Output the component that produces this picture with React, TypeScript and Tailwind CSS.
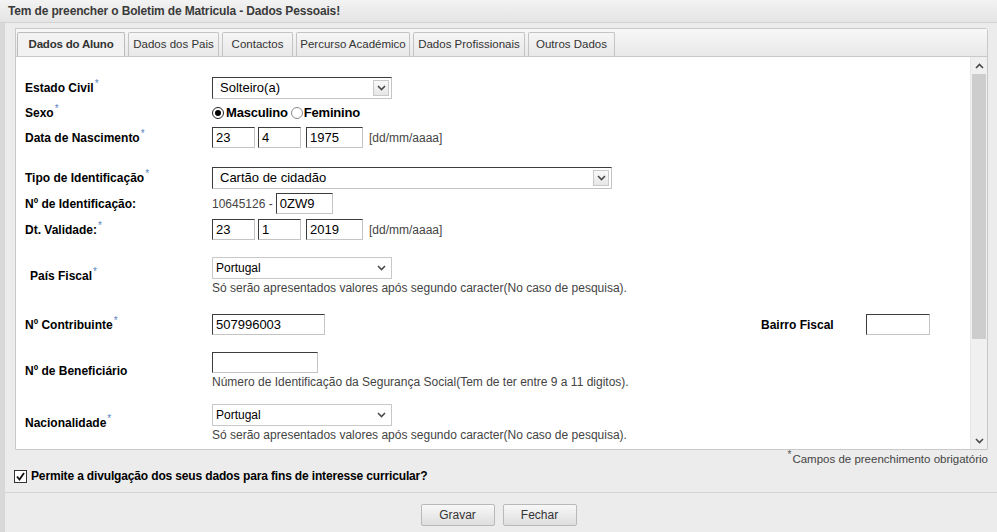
import React from "react";

const tabs = [
  { label: "Dados do Aluno", w: "w-[108px]" },
  { label: "Dados dos Pais", w: "w-[91px]" },
  { label: "Contactos", w: "w-[71px]" },
  { label: "Percurso Académico", w: "w-[114px]" },
  { label: "Dados Profissionais", w: "w-[112px]" },
  { label: "Outros Dados", w: "w-[87px]" },
];

const Req = () => (
  <sup className="ml-[1px] text-[10px] font-normal text-[#5a84c0]">*</sup>
);

const Label = ({ text, req, indent }: { text: string; req?: boolean; indent?: boolean }) => (
  <div
    className={`w-[187px] shrink-0 text-[12px] font-bold text-black ${indent ? "pl-[5px]" : ""}`}
  >
    {text}
    {req && <Req />}
  </div>
);

const Chevron = ({ up }: { up?: boolean }) => (
  <svg width="9" height="6" viewBox="0 0 9 6">
    <path
      d={up ? "M1 5 L4.5 1.5 L8 5" : "M1 1 L4.5 4.5 L8 1"}
      fill="none"
      stroke="#4a4a4a"
      strokeWidth="1.6"
    />
  </svg>
);

// classic inset text box
const Box = ({ w, value }: { w: string; value?: string }) => (
  <div
    className={`${w} flex h-[21px] items-center border border-t-[#3c3c3c] border-l-[#3c3c3c] border-r-[#c4c4c4] border-b-[#c4c4c4] bg-white pl-[3px] text-[13px] text-black`}
  >
    {value}
  </div>
);

const Select = ({ w, value }: { w: string; value: string }) => (
  <div
    className={`${w} flex h-[22px] items-center border border-t-[#3c3c3c] border-l-[#3c3c3c] border-r-[#c4c4c4] border-b-[#c4c4c4] bg-white`}
  >
    <span className="flex-1 pl-[7px] text-[13px] text-black">{value}</span>
    <span className="mr-[2px] flex h-[16px] w-[16px] items-center justify-center border border-[#c9c9c9] bg-gradient-to-b from-[#fafafa] to-[#e6e6e6]">
      <Chevron />
    </span>
  </div>
);

// autocomplete combo (lighter frame)
const Combo = ({ value }: { value: string }) => (
  <div className="flex h-[22px] w-[180px] items-center border border-[#c8c8c8] bg-white">
    <span className="flex-1 pl-[3px] text-[12px] text-black">{value}</span>
    <span className="mr-[3px] flex h-[16px] w-[14px] items-center justify-center">
      <Chevron />
    </span>
  </div>
);

const Hint = ({ children }: { children: React.ReactNode }) => (
  <div className="mt-[2px] text-[12px] leading-[14px] text-[#444]">{children}</div>
);

const Radio = ({ on }: { on?: boolean }) => (
  <span
    className={`flex h-[12px] w-[12px] items-center justify-center rounded-full border ${
      on ? "border-[#222]" : "border-[#8a8a8a]"
    } bg-white`}
  >
    {on && <span className="h-[6px] w-[6px] rounded-full bg-black" />}
  </span>
);

export default function App() {
  return (
    <div className="flex h-[532px] w-[997px] flex-col overflow-hidden bg-[#e7e7e7] font-['Liberation_Sans',Arial,sans-serif]">
      {/* Title bar */}
      <div className="flex h-[23px] shrink-0 items-center border-b border-[#d2d2d2] bg-gradient-to-b from-[#f3f3f3] to-[#e4e4e4] pl-[8px] text-[12px] font-bold tracking-[-0.15px] text-[#3a3a3a]">
        Tem de preencher o Boletim de Matricula - Dados Pessoais!
      </div>

      <div className="flex flex-1 flex-col border-l-[5px] border-l-[#d8d8d8] bg-[#ececec]">
        {/* Tab panel */}
        <div className="ml-[10px] mr-[9px] mt-[5px] flex flex-col rounded-tr-[3px] border border-[#c9c9c9] bg-white">
          <div className="flex h-[28px] items-end gap-[3px] border-b border-[#c9c9c9] bg-gradient-to-b from-[#f7f7f7] to-[#e9e9e9] pl-[1px]">
            {tabs.map((t, i) => (
              <div
                key={t.label}
                className={`${t.w} flex h-[24px] items-center justify-center rounded-t-[2px] border border-b-0 text-[11.5px] text-[#333] ${
                  i === 0
                    ? "border-[#bcbcbc] bg-[#f2f2f2] font-bold tracking-[-0.2px]"
                    : "border-[#c4c4c4] bg-gradient-to-b from-[#f6f6f6] to-[#e8e8e8]"
                }`}
              >
                {t.label}
              </div>
            ))}
          </div>

          <div className="flex h-[392px]">
            {/* Form */}
            <div className="flex-1 overflow-hidden pl-[9px] pt-[20px]">
              <div className="flex h-[22px] items-center">
                <Label text="Estado Civil" req />
                <Select w="w-[180px]" value="Solteiro(a)" />
              </div>

              <div className="mt-[2px] flex h-[24px] items-center">
                <Label text="Sexo" req />
                <div className="flex items-center text-[13px] font-bold tracking-[-0.2px] text-black">
                  <Radio on />
                  <span className="ml-[2px] mr-[3px]">Masculino</span>
                  <Radio />
                  <span className="ml-[1px]">Feminino</span>
                </div>
              </div>

              <div className="mt-[2px] flex h-[21px] items-center">
                <Label text="Data de Nascimento" req />
                <div className="flex items-center">
                  <Box w="w-[43px]" value="23" />
                  <div className="ml-[3px]">
                    <Box w="w-[43px]" value="4" />
                  </div>
                  <div className="ml-[5px]">
                    <Box w="w-[57px]" value="1975" />
                  </div>
                  <span className="ml-[6px] text-[12px] text-[#444]">[dd/mm/aaaa]</span>
                </div>
              </div>

              <div className="mt-[19px] flex h-[22px] items-center">
                <Label text="Tipo de Identificação" req />
                <Select w="w-[400px]" value="Cartão de cidadão" />
              </div>

              <div className="mt-[4px] flex h-[21px] items-center">
                <Label text="Nº de Identificação:" />
                <span className="mr-[3px] text-[12px] text-[#444]">10645126 -</span>
                <Box w="w-[57px]" value="0ZW9" />
              </div>

              <div className="mt-[5px] flex h-[21px] items-center">
                <Label text="Dt. Validade:" req />
                <div className="flex items-center">
                  <Box w="w-[43px]" value="23" />
                  <div className="ml-[3px]">
                    <Box w="w-[43px]" value="1" />
                  </div>
                  <div className="ml-[5px]">
                    <Box w="w-[57px]" value="2019" />
                  </div>
                  <span className="ml-[6px] text-[12px] text-[#444]">[dd/mm/aaaa]</span>
                </div>
              </div>

              <div className="mt-[17px] flex items-center">
                <Label text="País Fiscal" req indent />
                <div>
                  <Combo value="Portugal" />
                  <Hint>Só serão apresentados valores após segundo caracter(No caso de pesquisa).</Hint>
                </div>
              </div>

              <div className="mt-[19px] flex h-[21px] items-center">
                <Label text="Nº Contribuinte" req />
                <Box w="w-[113px]" value="507996003" />
                <div className="ml-auto mr-[40px] flex items-center">
                  <div className="w-[105px] text-[12px] font-bold text-black">Bairro Fiscal</div>
                  <Box w="w-[64px]" />
                </div>
              </div>

              <div className="mt-[17px] flex items-center">
                <Label text="Nº de Beneficiário" />
                <div>
                  <Box w="w-[106px]" />
                  <Hint>Número de Identificação da Segurança Social(Tem de ter entre 9 a 11 digitos).</Hint>
                </div>
              </div>

              <div className="mt-[15px] flex items-center">
                <Label text="Nacionalidade" req />
                <div>
                  <Combo value="Portugal" />
                  <Hint>Só serão apresentados valores após segundo caracter(No caso de pesquisa).</Hint>
                </div>
              </div>
            </div>

            {/* Scrollbar */}
            <div className="flex w-[17px] shrink-0 flex-col border-l border-[#e8e8e8] bg-[#f0f0f0]">
              <div className="flex h-[17px] items-center justify-center">
                <Chevron up />
              </div>
              <div className="mx-[1px] h-[265px] bg-[#cdcdcd]" />
              <div className="flex-1" />
              <div className="flex h-[17px] items-center justify-center">
                <Chevron />
              </div>
            </div>
          </div>
        </div>

        {/* Required note */}
        <div className="mr-[9px] mt-[1px] flex h-[17px] items-center justify-end text-[11.5px] text-[#444]">
          <sup className="mr-[1px] text-[10px] text-[#555]">*</sup>
          Campos de preenchimento obrigatório
        </div>

        {/* Consent checkbox */}
        <div className="ml-[9px] flex h-[16px] items-center text-[12px] font-bold tracking-[-0.15px] text-black">
          <span className="mr-[4px] flex h-[13px] w-[13px] items-center justify-center border border-[#333] bg-white">
            <svg width="9" height="9" viewBox="0 0 9 9">
              <path d="M1 4.5 L3.5 7.5 L8 1" fill="none" stroke="#111" strokeWidth="1.8" />
            </svg>
          </span>
          Permite a divulgação dos seus dados para fins de interesse curricular?
        </div>

        <div className="mt-[8px] border-t border-[#d3d3d3]" />

        {/* Buttons */}
        <div className="mt-[11px] flex justify-center gap-[8px] pr-[5px]">
          {["Gravar", "Fechar"].map((b) => (
            <div
              key={b}
              className="flex h-[22px] w-[74px] items-center justify-center rounded-[2px] border border-[#b9b9b9] bg-gradient-to-b from-[#f8f8f8] to-[#dedede] text-[12px] text-[#333]"
            >
              {b}
            </div>
          ))}
        </div>
      </div>
    </div>
  );
}
